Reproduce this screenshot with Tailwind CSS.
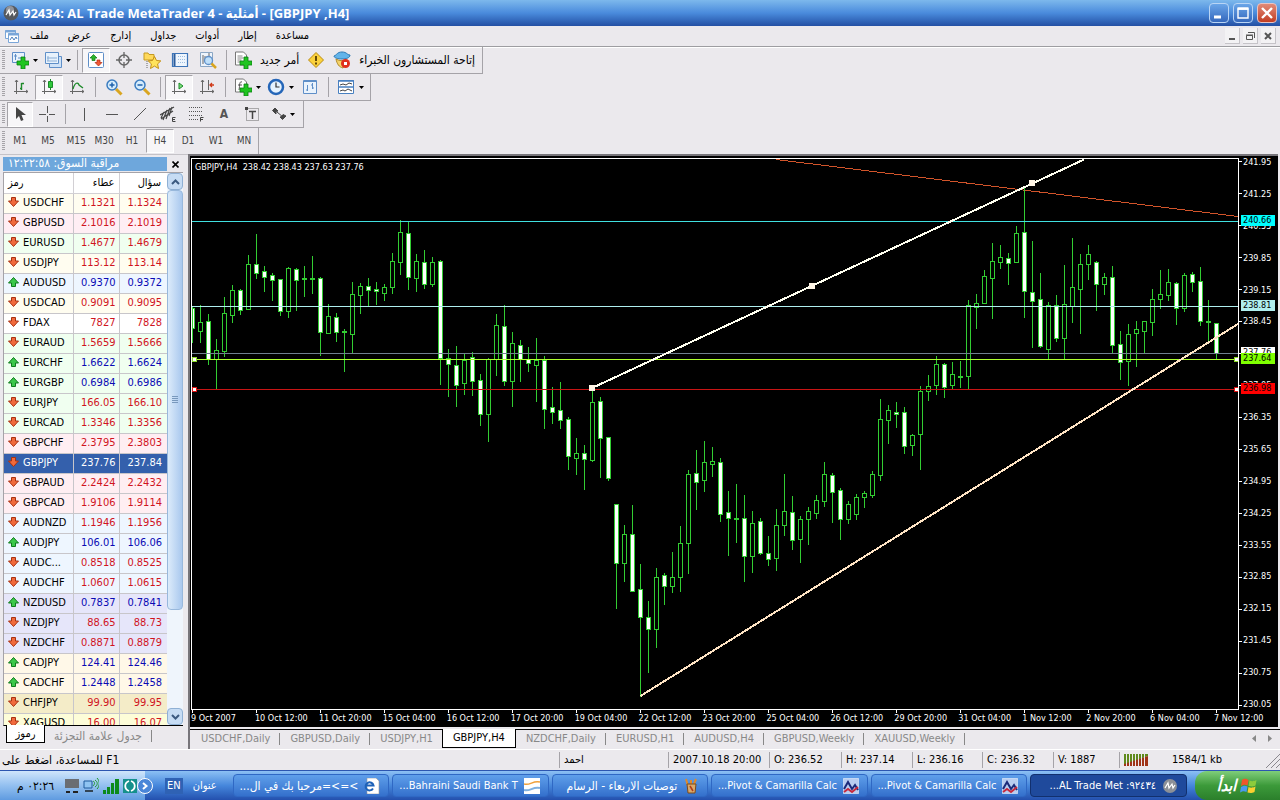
<!DOCTYPE html>
<html lang="ar">
<head>
    <meta charset="UTF-8">
    <meta name="viewport" content="width=device-width, initial-scale=1.0">
    <title>92434: AL Trade MetaTrader 4 - [GBPJPY,H4]</title>
    <script src="https://cdn.jsdelivr.net/npm/@tailwindcss/browser@4"></script>
</head>
<body class="h-screen flex flex-col overflow-hidden bg-[#ebe9ed] text-black text-[11px] leading-4 whitespace-nowrap font-['DejaVu_Sans_Condensed','DejaVu_Sans',sans-serif]">

    <!-- Title bar -->
    <header class="h-[26px] shrink-0 flex items-center px-[3px] bg-linear-to-b from-[#7db8ec] via-[#4a8bdc] to-[#2450a4]">
        <svg class="w-4 h-4" viewBox="0 0 16 16"><circle cx="8" cy="8" r="7.5" fill="#55595f"/><circle cx="7" cy="5" r="4" fill="#a9adb3" opacity=".7"/><path d="M3 10l3-5 1 5 3-4 1 4 2-3" fill="none" stroke="#fff" stroke-width="1.2"/></svg>
        <h1 class="ml-1 text-[13px] font-bold text-white font-['Open_Sans','DejaVu_Sans_Condensed',sans-serif]">92434: AL Trade MetaTrader 4 - <bdi>أمثلية</bdi> - [GBPJPY ,H4]</h1>
        <div class="ml-auto flex gap-1">
            <button aria-label="Minimize" class="w-5 h-5 rounded-sm border border-[#b9d5f5] bg-linear-to-b from-[#6aa5e8] to-[#3568bd]"><svg viewBox="0 0 18 18"><path d="M4 13h7" stroke="#fff" stroke-width="3"/></svg></button>
            <button aria-label="Maximize" class="w-5 h-5 rounded-sm border border-[#b9d5f5] bg-linear-to-b from-[#6aa5e8] to-[#3568bd]"><svg viewBox="0 0 18 18"><path d="M4 5h10v9H4zM4 5h10" fill="none" stroke="#fff" stroke-width="1.4"/><path d="M3.500 4.500h11" stroke="#fff" stroke-width="2.500"/></svg></button>
            <button aria-label="Close" class="w-5 h-5 rounded-sm border border-[#e8c4c4] bg-linear-to-b from-[#e08a78] to-[#c23c20]"><svg viewBox="0 0 18 18"><path d="M4 4l10 10M14 4L4 14" stroke="#fff" stroke-width="2.400"/></svg></button>
        </div>
    </header>

    <!-- Menu -->
    <nav class="h-[21px] shrink-0 flex items-center px-1 border-b border-[#9d9da1] shadow-[0_1px_0_#fff]">
        <svg class="w-4 h-4 mr-2" viewBox="0 0 16 16"><path d="M1.500 2.500h10v8h-10z" fill="#fff" stroke="#7aa6d8"/><path d="M1 3.500h11" stroke="#7aa6d8" stroke-width="2"/><path d="M4.500 5.500h10v9h-10z" fill="#fff" stroke="#7aa6d8"/><path d="M4 6.500h11" stroke="#7aa6d8" stroke-width="2"/><path d="M6 12l2-3 2 3 2-3 1 2" fill="none" stroke="#4d80bd"/></svg>
        <div class="flex gap-[19px] pl-[2px]">
            <a href="#">ملف</a>
            <a href="#">عرض</a>
            <a href="#">إدارج</a>
            <a href="#">جداول</a>
            <a href="#">أدوات</a>
            <a href="#">إطار</a>
            <a href="#">مساعدة</a>
        </div>
        <div class="ml-auto flex gap-[3px]">
            <button aria-label="Minimize chart" class="w-[15px] h-4 bg-[#f3f2f4] border-r border-b border-[#c5c3c8]"><svg viewBox="0 0 14 14"><path d="M4 10h6" stroke="#555" stroke-width="2"/></svg></button>
            <button aria-label="Restore chart" class="w-[15px] h-4 bg-[#f3f2f4] border-r border-b border-[#c5c3c8]"><svg viewBox="0 0 14 14"><path d="M3.500 6.500h6v4h-6zM5 3.500h6.500V9M3 6h7" fill="none" stroke="#555"/></svg></button>
            <button aria-label="Close chart" class="w-[15px] h-4 bg-[#f3f2f4] border-r border-b border-[#c5c3c8]"><svg viewBox="0 0 14 14"><path d="M4 4l6 6M10 4l-6 6" stroke="#555" stroke-width="2"/></svg></button>
        </div>
    </nav>

    <!-- Toolbars -->
    <div class="shrink-0 flex flex-col items-start">
        <div class="h-[27px] flex items-center pr-1 border-r border-b border-[#a5a3a8]">
            <span class="w-[3px] h-5 ml-[2px] mr-[2px] bg-[repeating-linear-gradient(#a5a3a8_0_1px,transparent_1px_2px)]"></span>
            <button aria-label="New chart" class="w-[33px] h-6 flex items-center pl-1"><svg class="w-[18px] h-[18px]" viewBox="0 0 18 18"><path d="M1.500 1.500h12v10h-12z" fill="#e8f2fc" stroke="#5f8fc8"/><path d="M4.500 3v6M3 5h3M7 7h3" stroke="#5f8fc8"/><path d="M10 6h4v4h4v4h-4v4h-4v-4H6v-4h4z" fill="#1fc41f" stroke="#0a7d12" stroke-width=".8"/></svg><svg class="w-[5px] h-[3px] ml-1" viewBox="0 0 5 3"><path d="M0 0h5L2.500 3z"/></svg></button>
            <button aria-label="Profiles" class="w-[33px] h-6 flex items-center pl-1"><svg class="w-[18px] h-[18px]" viewBox="0 0 18 18"><path d="M5.500 5.500h12v11h-12z" fill="#cfe2f7" stroke="#5f8fc8"/><path d="M1.500 1.500h13v11h-13z" fill="#e8f2fc" stroke="#5f8fc8"/><path d="M4 5v5M3 7h10M3 10h10" stroke="#8aaed6"/></svg><svg class="w-[5px] h-[3px] ml-1" viewBox="0 0 5 3"><path d="M0 0h5L2.500 3z"/></svg></button>
            <span class="w-px h-5 mx-1 bg-[#a5a3a8]"></span>
            <button aria-label="Market watch" class="w-7 h-[25px] flex items-center justify-center bg-[#f7f6f8] border border-[#a5a3a8] border-r-white border-b-white"><svg class="w-[18px] h-[18px]" viewBox="0 0 18 18"><rect x="1.500" y="1.500" width="15" height="15" rx="1" fill="#fff" stroke="#5f8fc8"/><path d="M6.500 3.500L10 7H8v2.500H5V7H3z" fill="#2cb52c" stroke="#0f7a16" stroke-width=".7"/><path d="M11.500 15L8 11.500h2V9h3v2.500h2z" fill="#f25a35" stroke="#b32a10" stroke-width=".7"/></svg></button>
            <button aria-label="Data window" class="w-7 h-6 flex items-center justify-center"><svg class="w-4 h-4" viewBox="0 0 16 16"><circle cx="8" cy="8" r="5" fill="none" stroke="#666" stroke-width="1.500"/><path d="M8 0v6M8 10v6M0 8h6M10 8h6" stroke="#666" stroke-width="1.300"/></svg></button>
            <button aria-label="Navigator" class="w-7 h-6 flex items-center justify-center"><svg class="w-[18px] h-[18px]" viewBox="0 0 18 18"><path d="M1 2h4l1 1.500h5V9H1z" fill="#ffd95a" stroke="#c59a22"/><path d="M4 10v7" stroke="#666" stroke-dasharray="1 1"/><path d="M11.500 5.500l2 4 4.300.4-3.200 3 .9 4.600-4-2.400-4 2.400.9-4.600-3.200-3 4.300-.4z" fill="#ffe35c" stroke="#c48f14"/></svg></button>
            <button aria-label="Terminal" class="w-7 h-6 flex items-center justify-center"><svg class="w-[18px] h-[18px]" viewBox="0 0 18 18"><path d="M1.500 2.500h15v13h-15z" fill="#eef5fd" stroke="#3d74b8" stroke-width="1.200"/><path d="M3.500 3v12" stroke="#2c5c9c" stroke-width="2"/><path d="M7 5.500h8M7 8.500h8M7 11.500h8" stroke="#9dbde0" stroke-dasharray="1 1"/></svg></button>
            <button aria-label="Strategy tester" class="w-7 h-6 flex items-center justify-center"><svg class="w-[18px] h-[18px]" viewBox="0 0 18 18"><path d="M1.500 1.500h12v14h-12z" fill="#eef4fb" stroke="#8aa6c4"/><path d="M4 4v9M6 5v3M10 2v4" stroke="#666"/><circle cx="9.500" cy="9.500" r="4" fill="#bfe0fa" stroke="#5f8fc8" stroke-width="1.300"/><path d="M12.500 12.500l4.500 4.500" stroke="#d9a520" stroke-width="2.500"/></svg></button>
            <span class="w-px h-5 mx-1 bg-[#a5a3a8]"></span>
            <button dir="rtl" class="h-6 flex flex-row-reverse items-center gap-2 px-[3px] text-[12px]"><svg class="w-[18px] h-[18px]" viewBox="0 0 18 18"><path d="M1.500 1h8l3 3v10h-11z" fill="#fff" stroke="#777"/><path d="M3.500 5h5M3.500 7h6M3.500 9h4M3.500 11h3" stroke="#888"/><path d="M10 6h4v4h4v4h-4v4h-4v-4H6v-4h4z" fill="#1fc41f" stroke="#0a7d12" stroke-width=".8"/></svg>أمر جديد</button>
            <button aria-label="MetaEditor" class="w-7 h-6 flex items-center justify-center"><svg class="w-4 h-4" viewBox="0 0 16 16"><path d="M8 .5L15.500 8 8 15.500.5 8z" fill="#fbd23c" stroke="#b98a10"/><path d="M8 4v5M8 10.500v2" stroke="#553c00" stroke-width="1.800"/></svg></button>
            <button dir="rtl" class="h-6 flex flex-row-reverse items-center gap-2 px-[3px] text-[12px]"><svg class="w-[18px] h-[18px]" viewBox="0 0 18 18"><path d="M1 5c3-1 3-4 8-4s5 3 8 3c0 3-4 4-8 4S1 7 1 5z" fill="#62b4ea" stroke="#2b78b4"/><path d="M3 8c1 5 3 8 7 9l4-8c-4 1-8 1-11-1z" fill="#f5d36a" stroke="#b08a28"/><circle cx="12.500" cy="12.500" r="4.500" fill="#e0301c"/><path d="M11 11h3v3h-3z" fill="#fff"/></svg>إتاحة المستشارون الخبراء</button>
        </div>

        <div class="h-[27px] flex items-center pr-1 border-r border-b border-[#a5a3a8]">
            <span class="w-[3px] h-5 ml-[2px] mr-[2px] bg-[repeating-linear-gradient(#a5a3a8_0_1px,transparent_1px_2px)]"></span>
            <button aria-label="Bar chart" class="w-7 h-6 flex items-center justify-center"><svg class="w-4 h-4" viewBox="0 0 16 16" fill="none" stroke="#666"><path d="M3.500 1v14M1 12.500h14M2 3l1.500-2L5 3M13 11l2 1.500-2 1.500"/><path d="M8.500 4v7M7 9.500h1.500M8.500 4.500H11" stroke="#1d8a2a" stroke-width="1.400"/></svg></button>
            <button aria-label="Candlesticks" class="w-7 h-[25px] flex items-center justify-center bg-[#f7f6f8] border border-[#a5a3a8] border-r-white border-b-white"><svg class="w-4 h-4" viewBox="0 0 16 16" fill="none" stroke="#666"><path d="M3.500 1v14M1 12.500h14M2 3l1.500-2L5 3M13 11l2 1.500-2 1.500"/><path d="M9.500 0v11" stroke="#1d8a2a"/><path d="M7.500 2.500h4v6h-4z" fill="#2fc93b" stroke="#1d8a2a"/></svg></button>
            <button aria-label="Line chart" class="w-7 h-6 flex items-center justify-center"><svg class="w-4 h-4" viewBox="0 0 16 16" fill="none" stroke="#666"><path d="M3.500 1v14M1 12.500h14M2 3l1.500-2L5 3M13 11l2 1.500-2 1.500"/><path d="M4 10c2-7 5-7 6-4l4 3" stroke="#1d8a2a" stroke-width="1.300"/></svg></button>
            <span class="w-px h-5 mx-1 bg-[#a5a3a8]"></span>
            <button aria-label="Zoom in" class="w-7 h-6 flex items-center justify-center"><svg class="w-[18px] h-[18px]" viewBox="0 0 18 18"><path d="M11 11l5.500 5.500" stroke="#d9a520" stroke-width="3"/><circle cx="7" cy="7" r="5" fill="#d5ecfc" stroke="#3b7cc0" stroke-width="1.500"/><path d="M4.500 7h5M7 4.500v5" stroke="#1f62ad" stroke-width="1.500"/></svg></button>
            <button aria-label="Zoom out" class="w-7 h-6 flex items-center justify-center"><svg class="w-[18px] h-[18px]" viewBox="0 0 18 18"><path d="M11 11l5.500 5.500" stroke="#d9a520" stroke-width="3"/><circle cx="7" cy="7" r="5" fill="#d5ecfc" stroke="#3b7cc0" stroke-width="1.500"/><path d="M4.500 7h5" stroke="#1f62ad" stroke-width="1.500"/></svg></button>
            <span class="w-px h-5 mx-1 bg-[#a5a3a8]"></span>
            <button aria-label="Auto scroll" class="w-7 h-[25px] flex items-center justify-center bg-[#f7f6f8] border border-[#a5a3a8] border-r-white border-b-white"><svg class="w-4 h-4" viewBox="0 0 16 16" fill="none" stroke="#666"><path d="M3.500 1v14M1 12.500h14M2 3l1.500-2L5 3M13 11l2 1.500-2 1.500"/><path d="M8 4l4 3-4 3z" fill="#7be07b" stroke="#1d8a2a"/></svg></button>
            <button aria-label="Chart shift" class="w-7 h-6 flex items-center justify-center"><svg class="w-4 h-4" viewBox="0 0 16 16" fill="none" stroke="#666"><path d="M3.500 1v14M1 12.500h14M2 3l1.500-2L5 3M13 11l2 1.500-2 1.500M9.500 1v10"/><path d="M15 6h-4M13 4l-2 2 2 2" stroke="#d03a18" stroke-width="1.300"/></svg></button>
            <span class="w-px h-5 mx-1 bg-[#a5a3a8]"></span>
            <button aria-label="Indicators" class="w-[33px] h-6 flex items-center pl-1"><svg class="w-[18px] h-[18px]" viewBox="0 0 18 18"><path d="M1.500 1h8l3 3v10h-11z" fill="#fff" stroke="#777"/><path d="M8 4c-3-1-2 3-3 8M4 7h4" fill="none" stroke="#555"/><path d="M10 6h4v4h4v4h-4v4h-4v-4H6v-4h4z" fill="#1fc41f" stroke="#0a7d12" stroke-width=".8"/></svg><svg class="w-[5px] h-[3px] ml-1" viewBox="0 0 5 3"><path d="M0 0h5L2.500 3z"/></svg></button>
            <button aria-label="Periods" class="w-[33px] h-6 flex items-center pl-1"><svg class="w-[18px] h-[18px]" viewBox="0 0 18 18"><circle cx="9" cy="9" r="7" fill="#e6f3fe" stroke="#2566b8" stroke-width="2.500"/><path d="M9 4.500V9h3.500" fill="none" stroke="#333" stroke-width="1.200"/></svg><svg class="w-[5px] h-[3px] ml-1" viewBox="0 0 5 3"><path d="M0 0h5L2.500 3z"/></svg></button>
            <button aria-label="Template" class="w-7 h-6 flex items-center justify-center"><svg class="w-4 h-4" viewBox="0 0 16 16"><path d="M1.500 1.500h13v13h-13z" fill="#eaf3fc" stroke="#5f8fc8"/><path d="M1 2.500h14" stroke="#5f8fc8"/><path d="M5.500 6v6M4 11h1.500M10.500 4v6M9 6h1.500M10.500 9H12" stroke="#5f8fc8"/></svg></button>
            <span class="w-px h-5 mx-1 bg-[#a5a3a8]"></span>
            <button aria-label="Chart layout" class="w-[33px] h-6 flex items-center pl-1"><svg class="w-[18px] h-[18px]" viewBox="0 0 18 18"><path d="M1.500 2.500h15v13h-15z" fill="#fff" stroke="#4880c0"/><path d="M1 3h16M1 9h16" stroke="#4880c0" stroke-width="1.500"/><path d="M3 7l3-1 3 1 3-2 3 1M3 13l3-1 2 1 3-2 4 2" fill="none" stroke="#444"/></svg><svg class="w-[5px] h-[3px] ml-1" viewBox="0 0 5 3"><path d="M0 0h5L2.500 3z"/></svg></button>
        </div>

        <div class="h-[27px] flex items-center pr-1 border-r border-b border-[#a5a3a8]">
            <span class="w-[3px] h-5 ml-[2px] mr-[2px] bg-[repeating-linear-gradient(#a5a3a8_0_1px,transparent_1px_2px)]"></span>
            <button aria-label="Cursor" class="w-[26px] h-[25px] flex items-center justify-center bg-[#f7f6f8] border border-[#a5a3a8] border-r-white border-b-white"><svg class="w-4 h-4" viewBox="0 0 16 16"><path d="M4 1v12l3-3 2 5 2.500-1-2-5H14z" fill="#444"/></svg></button>
            <button aria-label="Crosshair" class="w-7 h-6 flex items-center justify-center"><svg class="w-4 h-4" viewBox="0 0 16 16"><path d="M8.500 0v7M8.500 10v6M0 8.500h7M10 8.500h6" stroke="#555"/></svg></button>
            <span class="w-px h-5 mx-1 bg-[#a5a3a8]"></span>
            <button aria-label="Vertical line" class="w-7 h-6 flex items-center justify-center"><svg class="w-4 h-4" viewBox="0 0 16 16"><path d="M8.500 2v13" stroke="#555"/></svg></button>
            <button aria-label="Horizontal line" class="w-7 h-6 flex items-center justify-center"><svg class="w-4 h-4" viewBox="0 0 16 16"><path d="M2 8.500h12" stroke="#555"/></svg></button>
            <button aria-label="Trendline" class="w-7 h-6 flex items-center justify-center"><svg class="w-4 h-4" viewBox="0 0 16 16"><path d="M2 14L14 2" stroke="#555"/></svg></button>
            <button aria-label="Equidistant channel" class="w-7 h-6 flex items-center justify-center"><svg class="w-4 h-4" viewBox="0 0 16 16"><path d="M0 9l14-8M1 13l12-8M3 14l4-10M6 13l4-11M9 10l3-9M1 12l3-6" stroke="#444" stroke-width="1.200"/><path d="M15.500 11.500h-3v4h3M12.500 13.500h2.500" fill="none" stroke="#444"/></svg></button>
            <button aria-label="Fibonacci retracement" class="w-7 h-6 flex items-center justify-center"><svg class="w-4 h-4" viewBox="0 0 16 16"><path d="M1 1.500h14M1 5.500h14M1 9.500h14M1 13.500h9" stroke="#555" stroke-dasharray="1 1"/><path d="M15.500 11.500h-3v4M12.500 13.500h2.500" fill="none" stroke="#444"/></svg></button>
            <button class="w-7 h-6 text-[12px] font-bold text-[#555]">A</button>
            <button aria-label="Text label" class="w-7 h-6 flex items-center justify-center"><svg class="w-4 h-4" viewBox="0 0 16 16"><path d="M2.500 2.500h12v12h-12z" fill="none" stroke="#666" stroke-dasharray="1 1"/><path d="M5 5.500h7M8.500 5v8" stroke="#444" stroke-width="1.500"/><path d="M1 1h3v3H1z" fill="#444"/></svg></button>
            <button aria-label="Arrows" class="w-[33px] h-6 flex items-center pl-1"><svg class="w-[18px] h-[18px]" viewBox="0 0 18 18"><path d="M5 3l3 3-2 .5V9L2.500 5.500zM13 9.500l3 1.500-3.500 3.500-2.500-2.500 2-.5zM7 7l6 5" fill="#444" stroke="#444"/></svg><svg class="w-[5px] h-[3px] ml-[2px]" viewBox="0 0 5 3"><path d="M0 0h5L2.500 3z"/></svg></button>
        </div>

        <div class="h-[26px] flex items-center border-r border-[#a5a3a8] text-[#444] text-[10px]">
            <span class="w-[3px] h-5 ml-[2px] mr-[1px] bg-[repeating-linear-gradient(#a5a3a8_0_1px,transparent_1px_2px)]"></span>
            <button class="w-7 h-6">M1</button>
            <button class="w-7 h-6">M5</button>
            <button class="w-7 h-6">M15</button>
            <button class="w-7 h-6">M30</button>
            <button class="w-7 h-6">H1</button>
            <button class="w-7 h-6 bg-[#f7f6f8] border border-[#a5a3a8] border-r-white border-b-white">H4</button>
            <button class="w-7 h-6">D1</button>
            <button class="w-7 h-6">W1</button>
            <button class="w-7 h-6">MN</button>
        </div>
    </div>

    <main class="flex-1 min-h-0 flex">
        <!-- Market watch -->
        <aside class="w-[188px] shrink-0 flex flex-col pl-[3px] pr-[5px] pt-[2px] border-t border-[#c5c3c8]">
            <div class="h-[14px] flex items-center">
                <h2 dir="rtl" class="w-[167px] h-[14px] pr-12 leading-[13px] text-[12px] bg-[#6ea7dc] text-white text-right">مراقبة السوق: ١٢:٢٢:٥٨</h2>
                <button aria-label="Close panel" class="w-4 h-[14px] flex items-center justify-center"><svg class="w-[7px] h-[7px]" viewBox="0 0 7 7"><path d="M.5.5l6 6M6.500.5l-6 6" stroke="#000" stroke-width="1.600"/></svg></button>
            </div>
            <div class="flex-1 min-h-0 flex mt-[1px] border-t border-l border-[#a5a3a8] border-b border-b-black bg-white">
                <div class="flex-1 min-w-0 overflow-hidden">
                    <table class="w-full table-fixed border-collapse">
                        <thead>
                            <tr class="h-5 border-b border-[#d2d0d4]">
                                <th scope="col" class="w-[69px] px-1 font-normal text-left border-r border-[#d2d0d4]">رمز</th>
                                <th scope="col" class="w-[46px] px-1 font-normal text-right border-r border-[#d2d0d4]">عطاء</th>
                                <th scope="col" class="px-[6px] font-normal text-right">سؤال</th>
                            </tr>
                        </thead>
                        <tbody id="quotes"></tbody>
                    </table>
                </div>
                <div class="w-4 shrink-0 flex flex-col bg-[#eff5fc]">
                    <button aria-label="Scroll up" class="h-[17px] rounded-sm border border-[#8fb0d4] bg-[#c6dcf4] flex items-center justify-center"><svg class="w-[9px] h-[6px]" viewBox="0 0 9 6"><path d="M1 5l3.500-3.500L8 5" fill="none" stroke="#3b5a80" stroke-width="2"/></svg></button>
                    <div class="h-[76%] rounded-sm border border-[#98b8dc] bg-linear-to-r from-[#dcebfa] to-[#a9c8ee] flex items-center justify-center"><span class="w-[6px] h-[8px] bg-[repeating-linear-gradient(#7898bc_0_1px,transparent_1px_2px)]"></span></div>
                    <button aria-label="Scroll down" class="mt-auto h-[17px] rounded-sm border border-[#8fb0d4] bg-[#c6dcf4] flex items-center justify-center"><svg class="w-[9px] h-[6px]" viewBox="0 0 9 6"><path d="M1 1l3.500 3.500L8 1" fill="none" stroke="#3b5a80" stroke-width="2"/></svg></button>
                </div>
            </div>
            <div class="h-[23px] shrink-0 flex items-start pl-[3px]">
                <button class="-mt-px w-[39px] h-[18px] bg-white border border-t-0 border-black leading-4">رموز</button>
                <button class="px-[9px] leading-5 text-[12px] text-[#888]">جدول علامة التجزئة</button>
                <span class="w-px h-3 mt-1 bg-[#888]"></span>
            </div>
        </aside>

        <!-- Chart -->
        <section class="flex-1 min-w-0 flex flex-col border-l-2 border-[#77757a]">
            <div class="flex-1 min-h-0 mr-[2px] flex flex-col bg-black text-white text-[9px] leading-3 border-t-2 border-[#77757a]">
                <div class="relative flex-1 min-h-0 flex">
                    <div class="flex-1 min-w-0 pl-px pt-[2px]">
                        <svg id="plot" class="block w-full h-full overflow-visible" viewBox="191 158 1048 552" preserveAspectRatio="none" shape-rendering="crispEdges">
                            <path d="M776 159.500L1238 216.500" stroke="#d2542a" fill="none"/>
                            <g id="candles" stroke="#32cd32"></g>
                            <path d="M192 221.500h1046" stroke="#40e0e0"/>
                            <path d="M192 306.500h1046" stroke="#afeeee"/>
                            <path d="M192 353.500h1046" stroke="#708090"/>
                            <path d="M192 359.500h1046" stroke="#adff2f"/>
                            <path d="M192 389.500h1046" stroke="#c81414"/>
                            <path d="M592 388L1084 159.500" stroke="#fffff0" stroke-width="2"/>
                            <path d="M640.500 696L1238 324" stroke="#ffe4c4" stroke-width="2"/>
                            <path d="M589 385h6v6h-6zM809 283h6v6h-6zM1029 180h6v6h-6z" fill="#fff5e6"/>
                            <path d="M192.500 357.500h4v4h-4zM1234.500 357.500h4v4h-4z" fill="#fff" stroke="#8cdc28"/>
                            <path d="M192.500 387.500h4v4h-4zM1234.500 387.500h4v4h-4z" fill="#fff" stroke="#e01414"/>
                            <path d="M191.500 709.500V158.500H1238.500V709.500z" fill="none" stroke="#fff"/>
                            <path id="ticks" stroke="#fff"/>
                        </svg>
                    </div>
                    <div class="w-[39px] shrink-0 flex flex-col justify-between pl-[3px]" id="prices"></div>
                    <p class="absolute left-[5px] top-[5px]">GBPJPY,H4&nbsp; 238.42 238.43 237.63 237.76</p>
                    <span class="absolute right-[3px] top-[191px] w-[34px] h-[11px] pl-[2px] leading-[11px] bg-white text-black">237.76</span>
                    <span class="absolute right-[3px] top-[59px] w-[34px] h-[11px] pl-[2px] leading-[11px] bg-[#00ffff] text-black">240.66</span>
                    <span class="absolute right-[3px] top-[144px] w-[34px] h-[11px] pl-[2px] leading-[11px] bg-[#afeeee] text-black">238.81</span>
                    <span class="absolute right-[3px] top-[197px] w-[34px] h-[11px] pl-[2px] leading-[11px] bg-[#7fff00] text-black">237.64</span>
                    <span class="absolute right-[3px] top-[227px] w-[34px] h-[11px] pl-[2px] leading-[11px] bg-[#ff0000] text-black">236.98</span>
                </div>
                <div id="dates" class="h-[17px] shrink-0 grid grid-cols-[repeat(17,minmax(0,1fr))] pl-px pt-[2px]"></div>
            </div>

            <div class="h-[20px] shrink-0 flex items-start mt-[2px] pl-px border-t border-black text-[#888]">
                <button class="pl-[10px] pr-[9px] leading-[18px]">USDCHF,Daily</button>
                <span class="w-px h-3 mt-[3px] bg-[#888]"></span>
                <button class="pl-[10px] pr-[9px] leading-[18px]">GBPUSD,Daily</button>
                <span class="w-px h-3 mt-[3px] bg-[#888]"></span>
                <button class="pl-[10px] pr-[9px] leading-[18px]">USDJPY,H1</button>
                <button class="-mt-px px-[10px] h-[19px] leading-[18px] bg-white text-black border border-t-0 border-black">GBPJPY,H4</button>
                <button class="pl-[10px] pr-[9px] leading-[18px]">NZDCHF,Daily</button>
                <span class="w-px h-3 mt-[3px] bg-[#888]"></span>
                <button class="pl-[10px] pr-[9px] leading-[18px]">EURUSD,H1</button>
                <span class="w-px h-3 mt-[3px] bg-[#888]"></span>
                <button class="pl-[10px] pr-[9px] leading-[18px]">AUDUSD,H4</button>
                <span class="w-px h-3 mt-[3px] bg-[#888]"></span>
                <button class="pl-[10px] pr-[9px] leading-[18px]">GBPUSD,Weekly</button>
                <span class="w-px h-3 mt-[3px] bg-[#888]"></span>
                <button class="pl-[10px] pr-[9px] leading-[18px]">XAUUSD,Weekly</button>
                <span class="w-px h-3 mt-[3px] bg-[#888]"></span>
                <div class="ml-auto flex gap-3 pr-2 pt-[5px]">
                    <button aria-label="Previous tab"><svg class="w-1 h-[7px]" viewBox="0 0 4 7"><path d="M4 0v7L0 3.500z" fill="#888"/></svg></button>
                    <button aria-label="Next tab"><svg class="w-1 h-[7px]" viewBox="0 0 4 7"><path d="M0 0v7l4-3.500z" fill="#888"/></svg></button>
                </div>
            </div>
        </section>
    </main>

    <!-- Status bar -->
    <footer class="h-[21px] shrink-0 flex items-center border-t border-white">
        <p dir="rtl" class="flex-1 min-w-0 pl-[2px] text-left text-[12px]">F1 للمساعدة، اضغط على</p>
        <p class="w-[109px] pl-1 border-l border-[#a5a3a8]">احمد</p>
        <p class="w-[101px] pl-1 border-l border-[#a5a3a8]">2007.10.18 20:00</p>
        <p class="w-[72px] pl-1 border-l border-[#a5a3a8]">O: 236.52</p>
        <p class="w-[71px] pl-1 border-l border-[#a5a3a8]">H: 237.14</p>
        <p class="w-[70px] pl-1 border-l border-[#a5a3a8]">L: 236.16</p>
        <p class="w-[71px] pl-1 border-l border-[#a5a3a8]">C: 236.32</p>
        <p class="w-[66px] pl-1 border-l border-[#a5a3a8]">V: 1887</p>
        <div class="w-[161px] h-4 pl-1 flex items-center border-l border-[#a5a3a8]">
            <svg class="w-6 h-3" viewBox="0 0 24 12"><path d="M0 0h24v2L0 11z" fill="#5f8a1c"/><path d="M0 12V10L24 2v10z" fill="#a03418"/><path d="M2.500 0v12M5.500 0v12M8.500 0v12M11.500 0v12M14.500 0v12M17.500 0v12M20.500 0v12" stroke="#ebe9ed"/></svg>
            <p class="ml-6">1584/1 kb</p>
            <svg class="w-4 h-4 ml-auto" viewBox="0 0 16 16"><path d="M2 16L16 2M7 16l9-9M12 16l4-4" stroke="#8a888e"/></svg>
        </div>
    </footer>

    <!-- Taskbar -->
    <nav class="h-[30px] shrink-0 flex items-center text-white border-t border-[#2c56b0] bg-linear-to-b from-[#8cc0f4] via-[#4687dc] to-[#2450ae]">
        <div class="w-[145px] h-full pl-4 flex items-center gap-1 bg-linear-to-b from-[#cfe5fb] via-[#93c0f0] to-[#5f9be0] text-black">
            <time class="w-[38px] mr-[7px] text-[12px]" dir="rtl">٠٢:٢٦ م</time>
            <svg class="w-[14px] h-4" viewBox="0 0 14 16"><path d="M0 1h14v9H0z" fill="#6a6d72"/><path d="M1 14h4M8 14h5" stroke="#222" stroke-width="2"/></svg>
            <svg class="w-4 h-4" viewBox="0 0 16 16"><path d="M1 3h8v7H1z" fill="#8fc4f2" stroke="#1f5a9c"/><path d="M2 13h8" stroke="#345" stroke-width="2"/><path d="M10 3c2 1 2 3 0 5M12 2c3 2 3 5 0 7M14 0c3 3 3 8 0 11" fill="none" stroke="#1f9a2c"/></svg>
            <svg class="w-4 h-4" viewBox="0 0 16 16" fill="#0c8a1c"><path d="M0 12h3v4H0zM4 9h3v7H4zM8 5h3v11H8zM12 1h4v15h-4z"/></svg>
            <svg class="w-[14px] h-[14px]" viewBox="0 0 14 14"><path d="M0 0h14v14H0z" fill="#15908c"/><path d="M6 2C1 4 1 10 6 12M8 2c5 2 5 8 0 10" fill="none" stroke="#fff" stroke-width="1.800"/></svg>
        </div>
        <button aria-label="Show hidden icons" class="-ml-2 w-4 h-4 rounded-full border border-white bg-[#4a86d8] flex items-center justify-center"><svg class="w-2 h-2" viewBox="0 0 8 8"><path d="M2 1l3.500 3L2 7" fill="none" stroke="#fff" stroke-width="2"/></svg></button>
        <button class="ml-3 px-[2px] bg-[#2f62b4]">EN</button>
        <span class="w-[50px] pl-[10px]">عنوان</span>
        <div dir="rtl" class="flex-1 min-w-0 flex flex-row-reverse gap-[3px]">
            <button class="flex-1 min-w-0 h-[23px] flex items-center gap-[6px] pr-2 rounded-sm border border-[#2f68c4] bg-linear-to-b from-[#5f9fea] to-[#3470cc] text-[12px]"><svg class="w-4 h-4 shrink-0" viewBox="0 0 16 16"><path d="M3 0h9l3 3v13H3z" fill="#fff" stroke="#999" stroke-width=".6"/><path d="M9 10.500a4 4 0 1 1 .5-3H2" fill="none" stroke="#1e62b8" stroke-width="2"/></svg>&gt;=&gt;=مرحبا بك في ال...</button>
            <button class="flex-1 min-w-0 h-[23px] flex items-center gap-[6px] pr-2 rounded-sm border border-[#2f68c4] bg-linear-to-b from-[#5f9fea] to-[#3470cc]"><svg class="w-4 h-4 shrink-0" viewBox="0 0 16 16"><path d="M0 0h16v16H0z" fill="#fff"/><path d="M0 6c6 2 9-4 16-2" fill="none" stroke="#f0a03a" stroke-width="1.500"/><path d="M0 12c6 2 9-4 16-2" fill="none" stroke="#7fb0e0" stroke-width="2"/></svg><span>Bahraini Saudi Bank T...</span></button>
            <button class="flex-1 min-w-0 h-[23px] flex items-center gap-[6px] pr-2 rounded-sm border border-[#2f68c4] bg-linear-to-b from-[#5f9fea] to-[#3470cc] text-[12px]"><svg class="w-4 h-4 shrink-0" viewBox="0 0 16 16"><path d="M5 8L3 1M8 8V2M10 8l3-7" stroke="#e08a2a" stroke-width="2"/><path d="M4 6h9l-1 9H5z" fill="#d9a86a" stroke="#7a4a1a"/><path d="M7 8l3 5" stroke="#b03a1a" stroke-width="1.500"/></svg>توصيات الاربعاء - الرسام</button>
            <button class="flex-1 min-w-0 h-[23px] flex items-center gap-[6px] pr-2 rounded-sm border border-[#2f68c4] bg-linear-to-b from-[#5f9fea] to-[#3470cc]"><svg class="w-4 h-4 shrink-0" viewBox="0 0 16 16"><path d="M.5.500h15v15H.5z" fill="#b9cdf0" stroke="#fff" stroke-dasharray="1 1"/><path d="M1 11l4-7 4 7 3-4 3 5" fill="none" stroke="#1b2a7a" stroke-width="2"/><path d="M1 14l4-3 4 3 6-5" fill="none" stroke="#c8283c" stroke-width="2"/></svg><span>Pivot &amp; Camarilla Calc...</span></button>
            <button class="flex-1 min-w-0 h-[23px] flex items-center gap-[6px] pr-2 rounded-sm border border-[#2f68c4] bg-linear-to-b from-[#5f9fea] to-[#3470cc]"><svg class="w-4 h-4 shrink-0" viewBox="0 0 16 16"><path d="M.5.500h15v15H.5z" fill="#b9cdf0" stroke="#fff" stroke-dasharray="1 1"/><path d="M1 11l4-7 4 7 3-4 3 5" fill="none" stroke="#1b2a7a" stroke-width="2"/><path d="M1 14l4-3 4 3 6-5" fill="none" stroke="#c8283c" stroke-width="2"/></svg><span>Pivot &amp; Camarilla Calc...</span></button>
            <button class="flex-1 min-w-0 h-[23px] flex items-center gap-[6px] pr-2 rounded-sm border border-[#12306e] bg-[#1f4a9c]"><svg class="w-4 h-4 shrink-0" viewBox="0 0 16 16"><circle cx="8" cy="8" r="7" fill="#8c9097"/><path d="M3 10l3-5 1 5 3-4 1 4 2-3" fill="none" stroke="#fff" stroke-width="1.200"/></svg>٩٢٤٣٤: AL Trade Met...</button>
        </div>
        <button dir="rtl" class="ml-2 w-[85px] h-full shrink-0 flex items-center justify-center gap-1 rounded-l-xl bg-linear-to-b from-[#7fce7a] via-[#3c9a3a] to-[#2b7f2b] text-[16px] font-bold italic"><svg class="w-[18px] h-[18px]" viewBox="0 0 18 18"><path d="M2 3c3-2 4-1 6.500 0L7.500 8.500C5 7.500 4 7.500 1 9z" fill="#f0562a"/><path d="M9.500 3.500c2 1 4 1 7-.5l-1 5.500c-3 1.500-5 1-7 .5z" fill="#8ccc3c"/><path d="M1 10c3-1.500 4-1.500 6.500-.5L6.500 15C4 14 3 14 0 15.500z" fill="#4a9af0"/><path d="M8.500 10c2 1 4 1 7-.5l-1 5.500c-3 1.500-5 1-7 .5z" fill="#fbd030"/></svg>ابدأ</button>
    </nav>

    <script>
        // symbol, bid, ask, direction, row background
        const quotes = [
            ['USDCHF', '1.1321', '1.1324', 'd', '#fffdf0'],
            ['GBPUSD', '2.1016', '2.1019', 'd', '#ffeef4'],
            ['EURUSD', '1.4677', '1.4679', 'd', '#f0fff0'],
            ['USDJPY', '113.12', '113.14', 'd', '#fffdf0'],
            ['AUDUSD', '0.9370', '0.9372', 'u', '#eef6ff'],
            ['USDCAD', '0.9091', '0.9095', 'd', '#fffdf0'],
            ['FDAX', '7827', '7828', 'd', '#ffffff'],
            ['EURAUD', '1.5659', '1.5666', 'd', '#f0fff0'],
            ['EURCHF', '1.6622', '1.6624', 'u', '#f0fff0'],
            ['EURGBP', '0.6984', '0.6986', 'u', '#f0fff0'],
            ['EURJPY', '166.05', '166.10', 'd', '#f0fff0'],
            ['EURCAD', '1.3346', '1.3356', 'd', '#f0fff0'],
            ['GBPCHF', '2.3795', '2.3803', 'd', '#ffeef2'],
            ['GBPJPY', '237.76', '237.84', 's', '#3460ac'],
            ['GBPAUD', '2.2424', '2.2432', 'd', '#ffeef2'],
            ['GBPCAD', '1.9106', '1.9114', 'd', '#ffeef2'],
            ['AUDNZD', '1.1946', '1.1956', 'd', '#eef6ff'],
            ['AUDJPY', '106.01', '106.06', 'u', '#eef6ff'],
            ['AUDC...', '0.8518', '0.8525', 'd', '#eef6ff'],
            ['AUDCHF', '1.0607', '1.0615', 'd', '#eef6ff'],
            ['NZDUSD', '0.7837', '0.7841', 'u', '#e6e6fa'],
            ['NZDJPY', '88.65', '88.73', 'd', '#e6e6fa'],
            ['NZDCHF', '0.8871', '0.8879', 'd', '#e6e6fa'],
            ['CADJPY', '124.41', '124.46', 'u', '#fff8e8'],
            ['CADCHF', '1.2448', '1.2458', 'u', '#fff8e8'],
            ['CHFJPY', '99.90', '99.95', 'd', '#f4ecc8'],
            ['XAGUSD', '16.00', '16.07', 'd', '#fdfdd8'],
        ];
        const textColor = { d: 'text-[#d0141e]', u: 'text-[#0a0ab4]', s: 'text-white' };
        const down = '<svg class="inline-block w-[11px] h-[10px] mr-1 -mt-[2px]" viewBox="0 0 11 10"><path d="M3.500.5h4V4h3L5.500 9.500.5 4h3z" fill="#f06a3c" stroke="#a83010"/></svg>';
        const up = '<svg class="inline-block w-[11px] h-[10px] mr-1 -mt-[2px]" viewBox="0 0 11 10"><path d="M3.500 9.500h4V6h3L5.500.5.5 6h3z" fill="#3cc84a" stroke="#0f7a1c"/></svg>';
        document.getElementById('quotes').innerHTML = quotes.map(([sym, bid, ask, dir, bg]) => `
            <tr class="h-5 border-b border-[#c8c6ca]" style="background:${bg}">
                <td class="pl-1 overflow-hidden border-r border-[#c8c6ca] ${dir === 's' ? 'text-white' : ''}">${dir === 'u' ? up : down}${sym}</td>
                <td class="pr-[3px] text-right border-r border-[#c8c6ca] ${textColor[dir]}">${bid}</td>
                <td class="pr-[5px] text-right ${textColor[dir]}">${ask}</td>
            </tr>`).join('');

        // high, body top, body bottom, low, filled (one bar every 8 units)
        const bars = [
            [306,308,328,342,1],[305,322,331,342,0],[314,321,359,364,1],[339,350,359,389,0],[297,313,351,356,0],
            [285,290,315,322,0],[289,290,310,314,1],[255,264,309,309,0],[234,264,273,278,1],[266,271,277,291,1],
            [273,275,280,300,1],[279,279,311,315,1],[267,268,311,317,0],[268,269,280,310,1],[266,278,279,296,1],
            [256,278,279,293,1],[277,278,332,355,1],[304,316,333,333,0],[313,317,332,341,1],[329,331,332,371,1],
            [282,294,334,352,0],[283,286,295,313,0],[278,286,290,305,1],[282,289,291,304,1],[284,287,293,300,0],
            [253,261,287,293,0],[220,232,262,274,0],[221,233,277,289,1],[254,261,278,291,0],[250,262,284,288,1],
            [257,262,284,286,0],[260,261,358,384,1],[349,358,364,396,1],[346,365,385,406,1],[353,360,383,394,0],
            [352,357,381,395,1],[374,380,414,425,1],[358,359,414,441,0],[314,325,359,375,0],[305,326,381,385,1],
            [332,343,381,406,0],[340,345,359,381,1],[347,359,363,371,1],[338,360,365,401,0],[356,360,409,428,1],
            [387,407,412,423,1],[382,410,420,428,1],[417,419,456,469,1],[438,453,458,474,0],[445,453,459,489,1],
            [390,402,460,461,0],[397,401,438,477,1],[437,437,478,480,1],[504,504,563,608,1],[525,534,563,581,0],
            [505,534,591,591,1],[564,589,617,696,1],[601,617,629,672,1],[568,577,629,647,0],[573,575,586,604,1],
            [552,577,586,592,0],[526,543,577,591,0],[470,474,543,573,0],[450,473,482,509,1],[441,462,480,491,0],
            [447,461,464,476,0],[458,462,514,521,1],[491,512,518,555,1],[484,518,519,542,1],[495,518,556,581,1],
            [511,523,556,572,0],[518,521,553,554,1],[536,553,559,565,1],[509,525,558,570,0],[474,511,525,535,0],
            [496,512,540,549,1],[516,519,539,562,0],[507,511,519,544,0],[495,500,513,518,0],[462,474,501,506,0],
            [473,475,492,522,1],[488,490,519,539,1],[501,504,519,523,0],[494,497,514,519,0],[491,493,497,507,0],
            [471,474,495,497,0],[399,419,475,480,0],[405,410,420,443,0],[402,412,414,427,1],[407,412,446,453,1],
            [434,435,445,455,0],[386,391,434,469,0],[375,386,391,400,0],[356,364,385,394,0],[363,364,387,397,1],
            [362,374,385,389,0],[361,376,377,387,1],[300,305,376,389,0],[294,303,307,328,0],[270,276,303,303,0],
            [243,261,278,318,0],[245,257,262,268,0],[253,258,263,284,1],[226,233,262,262,0],[188,232,291,317,1],
            [241,292,301,347,1],[273,299,346,347,1],[302,305,349,359,0],[295,305,338,341,1],[265,304,338,358,0],
            [238,287,306,322,0],[254,264,289,333,0],[245,254,264,279,0],[261,262,284,310,1],[273,277,284,294,0],
            [266,277,345,352,1],[331,344,362,379,1],[324,334,361,385,0],[321,329,333,366,0],[321,321,331,353,0],
            [289,299,322,335,0],[270,294,299,308,0],[269,282,295,300,0],[282,283,308,324,1],[273,275,308,311,0],
            [272,274,282,291,1],[267,281,321,325,1],[300,321,322,341,1],[323,323,353,359,1],
        ];
        document.getElementById('candles').innerHTML = bars.map(([high, top, bottom, low, filled], i) => {
            const x = 192 + i * 8;
            const left = i ? x - 1.5 : x + .5;
            const width = i ? 4 : 2;
            return `<path d="M${x + .5} ${high}V${low + 1}"/><path d="M${left} ${top + .5}h${width}V${bottom + .5}h-${width}z" fill="${filled ? '#fff' : '#000'}"/>`;
        }).join('');

        let d = '';
        for (let i = 0; i < 18; i++) d += `M1239 ${161.5 + i * 32}h3`;
        for (let i = 0; i < 17; i++) d += `M${192.5 + i * 64} 710v3`;
        document.getElementById('ticks').setAttribute('d', d);

        document.getElementById('prices').innerHTML = Array.from({ length: 18 }, (_, i) =>
            `<span class="pl-px">${(241.95 - i * .7).toFixed(2)}</span>`).join('');

        document.getElementById('dates').innerHTML = ['9 Oct 2007', '10 Oct 12:00', '11 Oct 20:00', '15 Oct 04:00', '16 Oct 12:00', '17 Oct 20:00',
            '19 Oct 04:00', '22 Oct 12:00', '23 Oct 20:00', '25 Oct 04:00', '26 Oct 12:00', '29 Oct 20:00', '31 Oct 04:00', '1 Nov 12:00',
            '2 Nov 20:00', '6 Nov 04:00', '7 Nov 12:00'].map(t => `<span>${t}</span>`).join('');
    </script>
</body>
</html>
